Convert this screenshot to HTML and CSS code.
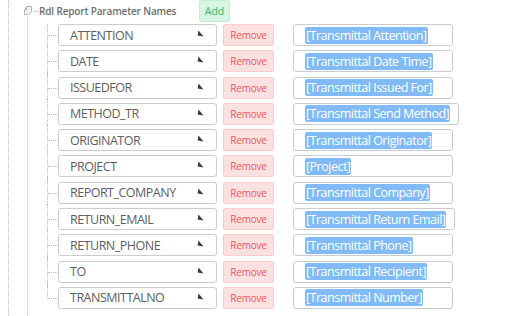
FILE: index.html
```html
<!DOCTYPE html>
<html>
<head>
<meta charset="utf-8">
<link rel="stylesheet" href="styles.css">
</head>
<body>
<div class="guide0">
  <div class="guide1">
    <div class="header">
      <span class="node-icon">
        <svg width="11" height="12" viewBox="0 0 11 12"><path d="M3.5 1.5 H8.5 V6.5 L6 9.5 H1.5 V5 Z" fill="#f3f3f3" stroke="#b5b5b5" stroke-width="1"/><path d="M3.5 1.5 V5 H1.5" fill="none" stroke="#b5b5b5"/></svg>
      </span>
      <span class="h-link"></span>
      <span class="title">Rdl Report Parameter Names</span>
      <button class="btn-add">Add</button>
    </div>
    <div class="list">
      <div class="row"><div class="name">ATTENTION<i class="tri"></i></div><button class="btn-remove">Remove</button><div class="value"><span class="sel">[Transmittal Attention]</span></div></div>
      <div class="row"><div class="name">DATE<i class="tri"></i></div><button class="btn-remove">Remove</button><div class="value"><span class="sel">[Transmittal Date Time]</span></div></div>
      <div class="row"><div class="name">ISSUEDFOR<i class="tri"></i></div><button class="btn-remove">Remove</button><div class="value"><span class="sel">[Transmittal Issued For]</span></div></div>
      <div class="row"><div class="name">METHOD_TR<i class="tri"></i></div><button class="btn-remove">Remove</button><div class="value"><span class="sel">[Transmittal Send Method]</span></div></div>
      <div class="row"><div class="name">ORIGINATOR<i class="tri"></i></div><button class="btn-remove">Remove</button><div class="value"><span class="sel">[Transmittal Originator]</span></div></div>
      <div class="row"><div class="name">PROJECT<i class="tri"></i></div><button class="btn-remove">Remove</button><div class="value"><span class="sel">[Project]</span></div></div>
      <div class="row"><div class="name">REPORT_COMPANY<i class="tri"></i></div><button class="btn-remove">Remove</button><div class="value"><span class="sel">[Transmittal Company]</span></div></div>
      <div class="row"><div class="name">RETURN_EMAIL<i class="tri"></i></div><button class="btn-remove">Remove</button><div class="value"><span class="sel">[Transmittal Return Email]</span></div></div>
      <div class="row"><div class="name">RETURN_PHONE<i class="tri"></i></div><button class="btn-remove">Remove</button><div class="value"><span class="sel">[Transmittal Phone]</span></div></div>
      <div class="row"><div class="name">TO<i class="tri"></i></div><button class="btn-remove">Remove</button><div class="value"><span class="sel">[Transmittal Recipient]</span></div></div>
      <div class="row"><div class="name">TRANSMITTALNO<i class="tri"></i></div><button class="btn-remove">Remove</button><div class="value"><span class="sel">[Transmittal Number]</span></div></div>
    </div>
  </div>
</div>
</body>
</html>
```
FILE: styles.css
```css
html, body {
  margin: 0;
  padding: 0;
  background: #ffffff;
  font-family: "Open Sans", "Noto Sans", sans-serif;
  overflow: hidden;
}
.guide0 {
  margin-left: 8px;
  border-left: 1px dotted #bdbdbd;
  height: 316px;
  box-sizing: border-box;
}
.guide1 {
  margin-left: 18px;
  height: 316px;
  position: relative;
}
.guide1::before {
  content: "";
  position: absolute;
  left: 0;
  top: 14px;
  bottom: 0;
  border-left: 1px dotted #bdbdbd;
}
.header {
  display: flex;
  align-items: center;
  height: 22px;
  position: relative;
}
.node-icon {
  margin-left: -4px;
  width: 11px;
  height: 12px;
  display: flex;
  position: relative;
  z-index: 1;
  background: #fff;
  margin-top: -1px;
}
.h-link {
  width: 4px;
  border-top: 1px dotted #bdbdbd;
  margin-top: 1px;
}
.title {
  margin-left: 1px;
  font-size: 10px;
  font-weight: 600;
  color: #6e6e6e;
  width: 160px;
  letter-spacing: -0.15px;
}
.btn-add {
  font-family: inherit;
  font-size: 10.5px;
  color: #2fb865;
  background: #d6f5e2;
  border: 1px solid #c2efd3;
  border-radius: 2px;
  height: 22px;
  width: 31px;
  padding: 0;
  margin-top: 0;
}
.list {
  margin-left: 20px;
  margin-top: 2px;
}
.row {
  display: flex;
  align-items: center;
  height: 22px;
  margin-bottom: 4.3px;
  position: relative;
  padding-left: 11px;
}
.row::before {
  content: "";
  position: absolute;
  left: 0;
  top: -4.3px;
  height: 30.3px;
  border-left: 1px dotted #bdbdbd;
}
.row:first-child::before {
  top: 0;
  height: 26.3px;
}
.row:last-child::before {
  height: 15.3px;
}
.row::after {
  content: "";
  position: absolute;
  left: 1px;
  top: 11px;
  width: 10px;
  border-top: 1px dotted #bdbdbd;
}
.name {
  width: 159px;
  height: 22px;
  box-sizing: border-box;
  border: 1px solid #c9cdd3;
  border-radius: 3px;
  display: flex;
  align-items: center;
  padding-left: 11px;
  font-size: 12.5px;
  letter-spacing: -0.5px;
  color: #5e5e5e;
  position: relative;
}
.tri {
  position: absolute;
  right: 12px;
  top: 6px;
  width: 0;
  height: 0;
  border-left: 6px solid transparent;
  border-bottom: 5px solid #3c3c3c;
  transform: scaleX(-1) rotate(-10deg);
}
.btn-remove {
  margin-left: 6px;
  width: 51px;
  height: 22px;
  padding: 0;
  font-family: inherit;
  font-size: 10px;
  letter-spacing: -0.2px;
  color: #f2555a;
  background: #fde1e1;
  border: 1px solid #fbcccc;
  border-radius: 2px;
}
.value {
  margin-left: 19px;
  min-width: 160px;
  height: 22px;
  box-sizing: border-box;
  border: 1px solid #c9cdd3;
  border-radius: 3px;
  display: flex;
  align-items: center;
  padding-left: 11px;
  padding-right: 8px;
}
.sel {
  background: #80bbf7;
  color: #ffffff;
  font-size: 12.5px;
  letter-spacing: -0.5px;
  line-height: 17px;
  padding: 0 1px;
  border-radius: 2px;
  white-space: nowrap;
}
```
